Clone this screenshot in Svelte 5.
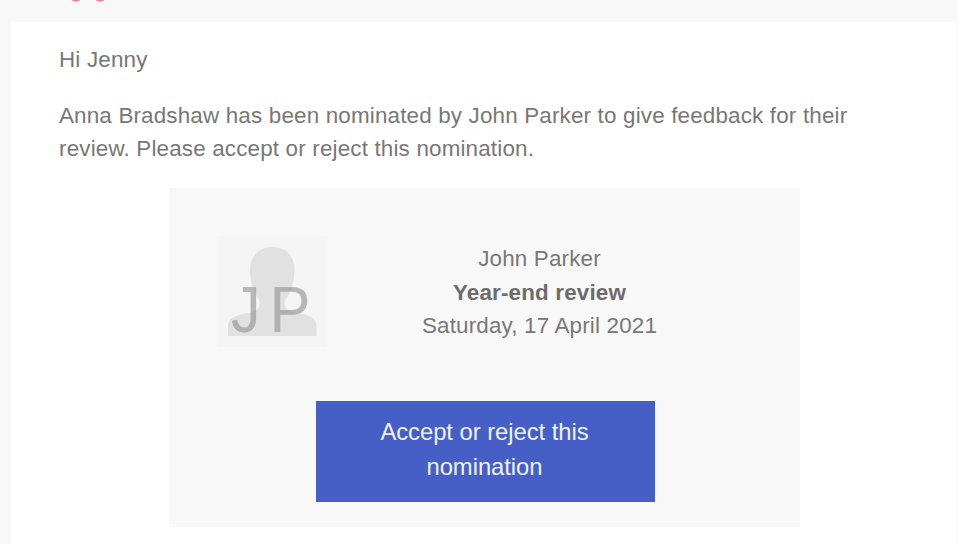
<script>
  const review = { name: 'John Parker', title: 'Year-end review', date: 'Saturday, 17 April 2021' };
</script>

<div class="page">
  <header><svg width="60" height="3" viewBox="0 0 60 3"><path d="M12 0h8q-4 2.600-8 0M36 0h8q-4 2.600-8 0" stroke="#f884b5" stroke-width="0.700" fill="#f35c9d" /></svg></header>
  <main>
    <p>Hi Jenny</p>
    <p class="intro">Anna Bradshaw has been nominated by John Parker to give feedback for their<br />review. Please accept or reject this nomination.</p>
    <section>
      <div class="person">
        <svg class="avatar" width="110" height="111" viewBox="0 0 110 111">
          <rect width="110" height="111" fill="#f5f5f5" />
          <path d="M33 34C33 19 43 11 55.500 11s22 8 22 23c0 14-4 22-8 28-4 7-1 12 6 14 14 3 24 4 24 14v10H11V90c0-10 11-11 24-14 7-2 10-7 6-14-4-7-8-14-8-28Z" fill="#e1e1e1" />
          <text x="14" y="95.500" textLength="29.500" lengthAdjust="spacingAndGlyphs">J</text>
          <text x="52.500" y="95.500" textLength="41" lengthAdjust="spacingAndGlyphs">P</text>
        </svg>
        <div class="details"><span>{review.name}</span><strong>{review.title}</strong><span>{review.date}</span></div>
      </div>
      <button>Accept or reject this<br />nomination</button>
    </section>
  </main>
</div>

<style>
  :global(body) { margin: 0; background: #fff; }
  .page { width: 958px; height: 544px; box-sizing: border-box; background: #f8f8f8; font: 22.4px/33.5px "Liberation Sans", Arial, sans-serif; letter-spacing: 0.174px; color: #777; overflow: hidden; }
  header { height: 22px; padding-left: 60px; box-sizing: border-box; }
  header svg { display: block; }
  main { margin: 0 1px 0 11px; height: 522px; box-sizing: border-box; padding: 21px 47px 0 48px; background: #fff; }
  p { margin: 0; white-space: nowrap; }
  .intro { margin-top: 22px; }
  section { margin: 22px 0 0 110px; width: 631px; height: 339px; box-sizing: border-box; padding-top: 48px; background: #f8f8f8; }
  .person { display: flex; padding-left: 48px; height: 165px; }
  .details { width: 425px; padding-top: 6.5px; display: flex; flex-direction: column; align-items: center; }
  strong { color: #6c6c6c; }
  .avatar text { font-size: 64px; letter-spacing: 0; fill: #999; fill-opacity: 0.68; }
  button { display: block; margin-left: 147px; width: 339px; height: 101px; padding: 0 2px 4px 0; border: 0; background: #455fc7; color: #f1f3fc; font: inherit; font-size: 23.8px; line-height: 35px; letter-spacing: -0.04px; }
</style>
